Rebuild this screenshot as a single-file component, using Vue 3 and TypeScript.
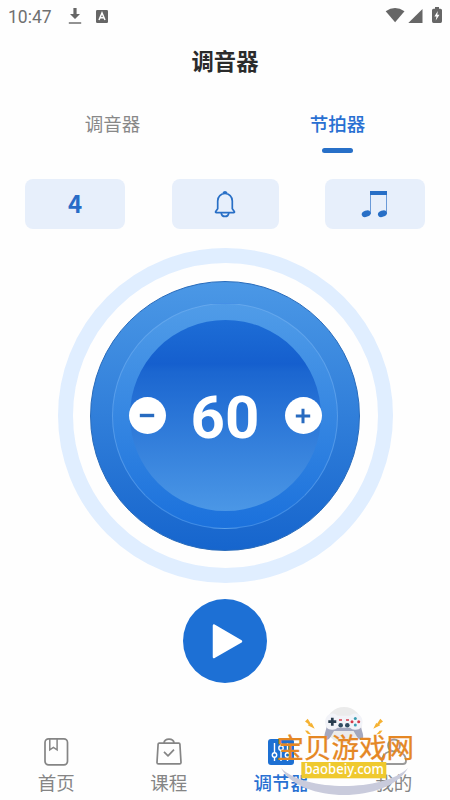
<script setup lang="ts">
import { ref } from 'vue'

const tabs: string[] = ['调音器', '节拍器']
const activeTab = ref(1)
const beats = ref(4)
const bpm = ref(60)
const playing = ref(false)

function changeBpm(step: number): void {
  bpm.value = Math.min(240, Math.max(20, bpm.value + step))
}
</script>

<template>
  <div class="screen">
    <header class="status">
      <span class="clock">10:47</span>
      <svg class="download" width="14" height="18" viewBox="0 0 14 18">
        <path d="M5.4 1h3.2v6H12l-5 5-5-5h3.4z" fill="#666" />
        <path d="M.8 16h12.4" stroke="#777" stroke-width="1.6" />
      </svg>
      <svg class="badge" width="12" height="13" viewBox="0 0 12 13">
        <rect width="12" height="13" rx="1.2" fill="#666" />
        <path d="M3 10 6 3l3 7M4 7.8h4" fill="none" stroke="#fff" stroke-width="1.5" />
      </svg>
      <svg class="signals" width="58" height="18" viewBox="0 0 58 18">
        <path d="M.7 4.2Q10 -2 19.5 4.2L10.1 15.3z" fill="#666" />
        <path d="M37.5 2v14H23.3z" fill="#666" />
        <path d="M50 0h4v1.8h1.5q1.5 0 1.5 1.5v11q0 1.7-1.5 1.7h-7q-1.500 0-1.500-1.700v-11q0-1.500 1.500-1.500H50z" fill="#666" />
        <path d="M52.8 4 49.4 9.400h2.100l-.8 4 3.800-5.700h-2.200z" fill="#fff" />
      </svg>
    </header>

    <h1 class="title">调音器</h1>

    <nav class="tabs">
      <button
        v-for="(tab, i) in tabs"
        :key="tab"
        class="tab"
        :class="{ active: i === activeTab }"
        @click="activeTab = i"
      >
        {{ tab }}
      </button>
    </nav>

    <section class="options">
      <button class="option beats">{{ beats }}</button>
      <button class="option">
        <svg width="24" height="28" viewBox="0 0 24 28" fill="none" stroke="#286fc6" stroke-width="1.7" stroke-linejoin="round">
          <path d="M10.2 3.1a2 2 0 0 1 3.6 0M4.7 18.8V11a7.3 7.5 0 0 1 14.6 0v7.8l2 2.7c.4.7.1 1.2-.7 1.2H3.4c-.8 0-1.1-.5-.7-1.2z" />
          <path d="M8.2 23c.7 4.6 6.9 4.6 7.6 0" />
        </svg>
      </button>
      <button class="option">
        <svg width="28" height="28" viewBox="0 0 28 28">
          <path d="M9.500 2v22M25.500 2v22" stroke="#6a9ad8" stroke-width="1" fill="none" />
          <path d="M9 1h17v4H9z" fill="#286fc6" />
          <ellipse cx="5.2" cy="23.700" rx="4.6" ry="3.1" transform="rotate(-20 5.2 23.7)" fill="#286fc6" />
          <ellipse cx="21.4" cy="23.700" rx="4.6" ry="3.1" transform="rotate(-20 21.4 23.7)" fill="#286fc6" />
        </svg>
      </button>
    </section>

    <section class="ring">
      <div class="disc">
        <div class="bevel">
          <div class="core">
            <button class="round" @click="changeBpm(-1)">
              <svg width="16" height="16" viewBox="0 0 16 16"><path d="M.8 7.500h14.400" stroke="#286bc0" stroke-width="3.4" /></svg>
            </button>
            <span class="bpm">{{ bpm }}</span>
            <button class="round" @click="changeBpm(1)">
              <svg width="16" height="16" viewBox="0 0 16 16"><path d="M.8 8h14.400M8 .8v14.400" stroke="#286bc0" stroke-width="3" /></svg>
            </button>
          </div>
        </div>
      </div>
    </section>

    <button class="play" @click="playing = !playing">
      <svg width="32" height="36" viewBox="0 0 32 36">
        <path d="M3 2.500 30 18.300 3 34z" fill="#fff" stroke="#fff" stroke-width="2.500" stroke-linejoin="round" />
      </svg>
    </button>

    <footer class="nav">
      <a class="nav-item">
        <svg width="28" height="30" viewBox="0 0 28 30" fill="none" stroke="#858585" stroke-width="1.7">
          <rect x="3" y="1.9" width="22.5" height="26" rx="3.6" />
          <path d="M7.8 2v10.800l3.600-2.400 3.700 2.400V2" stroke-width="1.5" />
        </svg>
        <span>首页</span>
      </a>
      <a class="nav-item">
        <svg width="28" height="30" viewBox="0 0 28 30" fill="none" stroke="#858585" stroke-width="1.7" stroke-linejoin="round">
          <path d="M4.200 6.200h19.600q1 0 1.100 1l1.100 18.200q0 1.400-1.400 1.400H3.400q-1.400 0-1.400-1.400L3.100 7.200q.1-1 1.100-1zM8.900 6c.8-5.200 9.400-5.200 10.200 0" />
          <path d="m9 14.800 4 4 6-6.200" />
        </svg>
        <span>课程</span>
      </a>
      <a class="nav-item current">
        <svg width="28" height="30" viewBox="0 0 28 30">
          <rect x="1" y="2" width="26" height="26" rx="3" fill="#1d70d3" />
          <path d="M7.500 6v18M14 6v18M20.500 6v18" stroke="#fff" stroke-width="1.4" />
          <g fill="#1d70d3" stroke="#fff" stroke-width="1.4">
            <circle cx="7.5" cy="18" r="2.2" /><circle cx="14" cy="11" r="2.2" /><circle cx="20.5" cy="18" r="2.2" />
          </g>
        </svg>
        <span>调节器</span>
      </a>
      <a class="nav-item">
        <svg width="28" height="30" viewBox="0 0 28 30" fill="none" stroke="#999" stroke-width="1.8">
          <circle cx="14" cy="8.5" r="6" />
          <path d="M9.500 14.500C4.800 16 2 19 2 24q0 3 3 3h18q3 0 3-3c0-5-2.800-8-7.500-9.500" />
        </svg>
        <span>我的</span>
      </a>
    </footer>

    <svg class="mark" width="150" height="95" viewBox="0 0 150 95">
      <circle cx="74" cy="20" r="18" fill="#ebebeb" />
      <path d="M11 63C35 87 113 87 138 63C118 99 30 99 11 63z" fill="#c9cbdc" />
      <path d="M59 14 54.700 29q-1.200 5.500 1.800 6 2 .3 4-3l3.500-6h19.600l3.500 6q2 3.300 4 3 3-.5 1.800-6L88.600 14z" fill="#a4a8bf" />
      <path d="M59 9.500q3.400-2 7 0l1.500 1.200h12.600l1.500-1.200q3.600-2 7 0q3.700 2.300 4 7.300q0 7.700-7 8q-3.500.3-5.600-2H67.600q-2.100 2.300-5.600 2q-7-.3-7-8q.3-5 4-7.300z" fill="#f2f3f8" />
      <path d="M62.300 12.700v8M58.300 16.700h8" stroke="#273b4d" stroke-width="2.7" />
      <g fill="#304c60"><circle cx="70.7" cy="20.300" r="2.300" /><circle cx="77.3" cy="20.300" r="2.300" /></g>
      <g fill="#d43a48"><circle cx="82" cy="16.700" r="1.500" /><circle cx="88.700" cy="16.700" r="1.500" /><path d="M69 14.200h3v1.500h-3zM76 14.200h3v1.500h-3z" /></g>
      <g fill="#3a9cb1"><circle cx="85.300" cy="13.400" r="1.500" /><circle cx="85.300" cy="20" r="1.500" /></g>
      <g fill="#f5b233">
        <path d="m37.700 13.700 3.200 5 .8-1 3 6-7-3.500 1-1-3.700-2.700zM35 25.500l3 .2.700 1 2.500 2.700-3.700-.7-.8-.9z" />
        <path d="m110.300 13.700-3.200 5-.8-1-3 6 7-3.500-1-1 3.700-2.700zM112.500 25.500l-3 .2-.7 1-2.500 2.700 3.700-.7.8-.9z" />
      </g>
      <text x="6.500" y="52.700" class="mark-title">宝贝游戏网</text>
      <rect x="31.3" y="57" width="85" height="16.3" fill="#efc92e" />
      <text x="34.500" y="69.200" class="mark-url" textLength="79.500" lengthAdjust="spacingAndGlyphs">baobeiy.com</text>
    </svg>
  </div>
</template>

<style>
body {
  margin: 0;
  background: #fff;
}
</style>

<style scoped>
.screen {
  position: relative;
  display: flex;
  flex-direction: column;
  align-items: center;
  box-sizing: border-box;
  width: 450px;
  height: 800px;
  overflow: hidden;
  background: #fefefe;
  font-family: Roboto, "Noto Sans CJK SC", sans-serif;
}

button {
  padding: 0;
  border: 0;
  background: none;
  font: inherit;
  cursor: pointer;
}

svg {
  display: block;
  flex: none;
}

.status {
  display: flex;
  align-items: center;
  box-sizing: border-box;
  width: 100%;
  height: 32px;
  padding: 0 7px 0 8px;
  color: #707070;
}

.clock {
  width: 60px;
  font-size: 17.5px;
  line-height: 32px;
  padding-top: 1px;
}

.badge {
  margin-left: 14px;
}

.signals {
  margin-left: auto;
}

.title {
  margin: 14px 0 0;
  font-size: 22.3px;
  font-weight: 700;
  line-height: 32px;
  color: #2b2b2b;
}

.tabs {
  display: flex;
  width: 100%;
  height: 76px;
  margin-top: 25px;
}

.tab {
  display: flex;
  flex: 1;
  flex-direction: column;
  align-items: center;
  padding-top: 8px;
  font-size: 18.5px;
  line-height: 28px;
  color: #888;
}

.tab.active {
  font-weight: 500;
  color: #2870d2;
}

.tab.active::after {
  content: "";
  width: 31px;
  height: 5px;
  margin-top: 9px;
  border-radius: 3px;
  background: #2870c8;
}

.options {
  display: grid;
  grid-template-columns: 100px 107px 100px;
  justify-content: space-between;
  width: 400px;
  height: 50px;
  margin-top: -0.5px;
}

.option {
  display: flex;
  align-items: center;
  justify-content: center;
  border-radius: 8px;
  background: #e7effb;
}

.beats {
  padding-bottom: 3px;
  font-family: "Noto Sans CJK SC", sans-serif;
  font-size: 24px;
  font-weight: 700;
  color: #286cc7;
}

.ring,
.disc,
.bevel,
.core {
  display: flex;
  flex: none;
  align-items: center;
  justify-content: center;
  box-sizing: border-box;
  border-radius: 50%;
}

.ring {
  width: 335px;
  height: 335px;
  margin-top: 19.5px;
  border: 15px solid #e0eeff;
}

.disc {
  width: 270px;
  height: 270px;
  border: 1px solid #286bbb;
  background: linear-gradient(#4b98e6, #1665cd);
}

.bevel {
  width: 226px;
  height: 226px;
  border: 1.5px solid rgba(125, 183, 245, 0.45);
  border-bottom-color: rgba(100, 165, 238, 0.5);
  background: linear-gradient(#509ce8, #1b71dc);
}

.core {
  gap: 25px;
  width: 191px;
  height: 191px;
  background: linear-gradient(#1d6dd6 0%, #155fce 23%, #1b66d0 27%, #4b97e6 100%);
}

.round {
  display: flex;
  flex: none;
  align-items: center;
  justify-content: center;
  width: 37px;
  height: 37px;
  border-radius: 50%;
  background: #fff;
}

.bpm {
  flex: none;
  width: 69px;
  padding-top: 4px;
  font-size: 60px;
  font-weight: 700;
  line-height: 60px;
  text-align: center;
  color: #fff;
}

.play {
  display: flex;
  flex: none;
  align-items: center;
  justify-content: center;
  box-sizing: border-box;
  width: 84px;
  height: 84px;
  margin-top: 16px;
  padding-left: 3px;
  border-radius: 50%;
  background: #1d70d5;
}

.nav {
  display: grid;
  grid-template-columns: repeat(4, 1fr);
  width: 100%;
  margin-top: 54px;
}

.nav-item {
  display: flex;
  flex-direction: column;
  align-items: center;
  font-size: 18.5px;
  line-height: 26px;
  color: #858585;
}

.nav-item span {
  margin-top: 4px;
}

.nav-item.current {
  font-weight: 500;
  color: #2870d2;
}

.mark {
  position: absolute;
  left: 270px;
  top: 705px;
  pointer-events: none;
}

.mark-title {
  font-family: "Noto Sans CJK SC", sans-serif;
  font-size: 27.5px;
  fill: #e58724;
  stroke: #e58724;
  stroke-width: 0.3px;
}

.mark-url {
  font-family: "Noto Sans", sans-serif;
  font-size: 14.5px;
  font-weight: 500;
  fill: #fff;
}
</style>
